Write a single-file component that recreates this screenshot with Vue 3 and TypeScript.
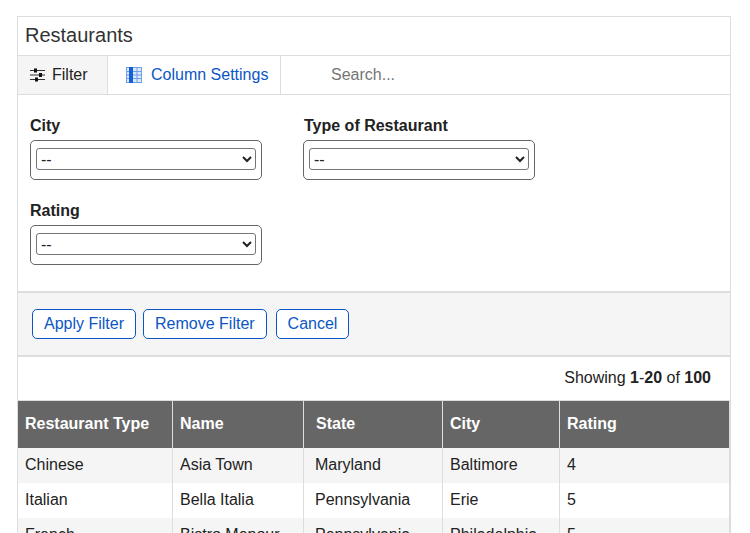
<script setup lang="ts">
import { ref } from 'vue'

const search = ref('')

const filters = [
  { label: 'City' },
  { label: 'Type of Restaurant' },
  { label: 'Rating' }
]

const buttons = ['Apply Filter', 'Remove Filter', 'Cancel']

const columns = ['Restaurant Type', 'Name', 'State', 'City', 'Rating']

const rows = [
  ['Chinese', 'Asia Town', 'Maryland', 'Baltimore', '4'],
  ['Italian', 'Bella Italia', 'Pennsylvania', 'Erie', '5'],
  ['French', 'Bistro Menour', 'Pennsylvania', 'Philadelphia', '5']
]
</script>

<template>
  <div class="page">
    <div class="panel">
      <h1 class="title">Restaurants</h1>

      <div class="toolbar">
        <button class="tab tab-active" type="button">
          <svg class="tab-icon" width="16" height="14" viewBox="0 0 16 14">
            <path d="M0 2.5h15M0 7h15M0 11.5h15" stroke="#333" stroke-width="1" fill="none" />
            <rect x="4" y="0.5" width="3" height="4" fill="#111" />
            <rect x="9" y="5" width="3" height="4" fill="#111" />
            <rect x="5" y="9.5" width="3" height="4" fill="#111" />
          </svg>
          Filter
        </button>
        <button class="tab tab-link" type="button">
          <svg class="tab-icon" width="16" height="16" viewBox="0 0 16 16">
            <rect x="0.5" y="0.5" width="15" height="15" fill="#dce8fa" stroke="#6f9fe6" />
            <path d="M11 0v16M0 4.5h16M0 8h16M0 11.5h16" stroke="#6f9fe6" stroke-width="1" fill="none" />
            <rect x="3" y="0" width="4" height="16" fill="#1560d4" />
          </svg>
          Column Settings
        </button>
        <input v-model="search" class="search" type="text" placeholder="Search..." />
      </div>

      <form class="filters">
        <div v-for="f in filters" :key="f.label" class="field">
          <label class="field-label">{{ f.label }}</label>
          <div class="select-box">
            <select class="select">
              <option>--</option>
            </select>
          </div>
        </div>
      </form>

      <div class="actions">
        <button v-for="b in buttons" :key="b" class="action" type="button">{{ b }}</button>
      </div>

      <div class="summary">Showing <b>1</b>-<b>20</b> of <b>100</b></div>

      <div class="table-wrap">
        <table class="table">
          <colgroup>
            <col style="width: 155px" />
            <col style="width: 131px" />
            <col style="width: 139px" />
            <col style="width: 117px" />
            <col style="width: 169px" />
          </colgroup>
          <thead>
            <tr>
              <th v-for="c in columns" :key="c">{{ c }}</th>
            </tr>
          </thead>
          <tbody>
            <tr v-for="row in rows" :key="row[1]">
              <td v-for="(cell, i) in row" :key="i">{{ cell }}</td>
            </tr>
          </tbody>
        </table>
      </div>
    </div>
  </div>
</template>

<style>
html,
body {
  margin: 0;
  height: 533px;
  overflow: hidden;
  background: #fff;
}
</style>

<style scoped>
.page {
  padding: 16px 19px 0 17px;
  font-family: "Liberation Sans", Arial, sans-serif;
  font-size: 16px;
  color: #222;
}

.panel {
  border: 1px solid #ddd;
  border-bottom: 0;
}

.title {
  margin: 0;
  height: 38px;
  padding-left: 7px;
  font-size: 20px;
  font-weight: 400;
  line-height: 36px;
  color: #333;
  border-bottom: 1px solid #ddd;
}

.toolbar {
  display: flex;
  height: 38px;
  border-bottom: 1px solid #ddd;
}

.tab {
  display: flex;
  align-items: center;
  gap: 6px;
  padding: 0;
  border: 0;
  border-right: 1px solid #ddd;
  background: #fff;
  font: inherit;
  color: #222;
}

.tab-active {
  width: 90px;
  padding-left: 12px;
  background: #f5f5f5;
}

.tab-link {
  width: 173px;
  padding-left: 18px;
  gap: 9px;
  color: #0b56c4;
}

.tab-icon {
  flex: none;
}

.search {
  width: 200px;
  margin-left: 50px;
  padding: 0;
  border: 0;
  outline: 0;
  font: inherit;
  color: #222;
}

.search::placeholder {
  color: #757575;
}

.filters {
  display: grid;
  grid-template-columns: 232px 232px;
  column-gap: 41px;
  row-gap: 22px;
  height: 198px;
  box-sizing: border-box;
  align-content: start;
  padding: 22px 0 0 12px;
  border-bottom: 2px solid #ddd;
}

.field-label {
  display: block;
  margin-bottom: 5px;
  font-weight: 700;
  line-height: 18px;
}

.field:nth-child(2) .field-label {
  margin-left: 1px;
}

.select-box {
  display: flex;
  align-items: center;
  box-sizing: border-box;
  height: 40px;
  padding: 0 5px 2px;
  border: 1px solid #666;
  border-radius: 5px;
}

.select {
  width: 100%;
  height: 22px;
  border: 1px solid #767676;
  border-radius: 3px;
  background-color: #fff;
  color: #222;
  font-family: "Liberation Sans", Arial, sans-serif;
  font-size: 16px;
}

.actions {
  display: flex;
  gap: 7px;
  height: 64px;
  box-sizing: border-box;
  padding: 16px 0 0 14px;
  background: #f5f5f5;
  border-bottom: 2px solid #ddd;
}

.action {
  height: 30px;
  padding: 0 11px;
  border: 1px solid #0b56c4;
  border-radius: 5px;
  background: #fff;
  font: inherit;
  color: #0b56c4;
}

.action:last-child {
  margin-left: 2px;
}

.summary {
  height: 43px;
  padding-right: 19px;
  line-height: 41px;
  text-align: right;
}

.table-wrap {
  border-right: 1px solid #ddd;
}

.table {
  width: 100%;
  table-layout: fixed;
  border-collapse: separate;
  border-spacing: 0;
}

.table th {
  height: 48px;
  padding: 0 7px 2px;
  box-sizing: border-box;
  background: #666;
  color: #fff;
  font-weight: 700;
  text-align: left;
  border-right: 1px solid #ddd;
  border-top: 1px solid #ddd;
}

.table th:last-child,
.table td:last-child {
  border-right: 0;
}

.table th:nth-child(3) {
  padding-left: 12px;
}

.table td {
  height: 35px;
  padding: 0 7px 2px;
  box-sizing: border-box;
  border-right: 1px solid #ddd;
  white-space: nowrap;
  overflow: hidden;
}

.table td:nth-child(3) {
  padding-left: 11px;
}

.table tbody tr:nth-child(odd) {
  background: #f5f5f5;
}
</style>
